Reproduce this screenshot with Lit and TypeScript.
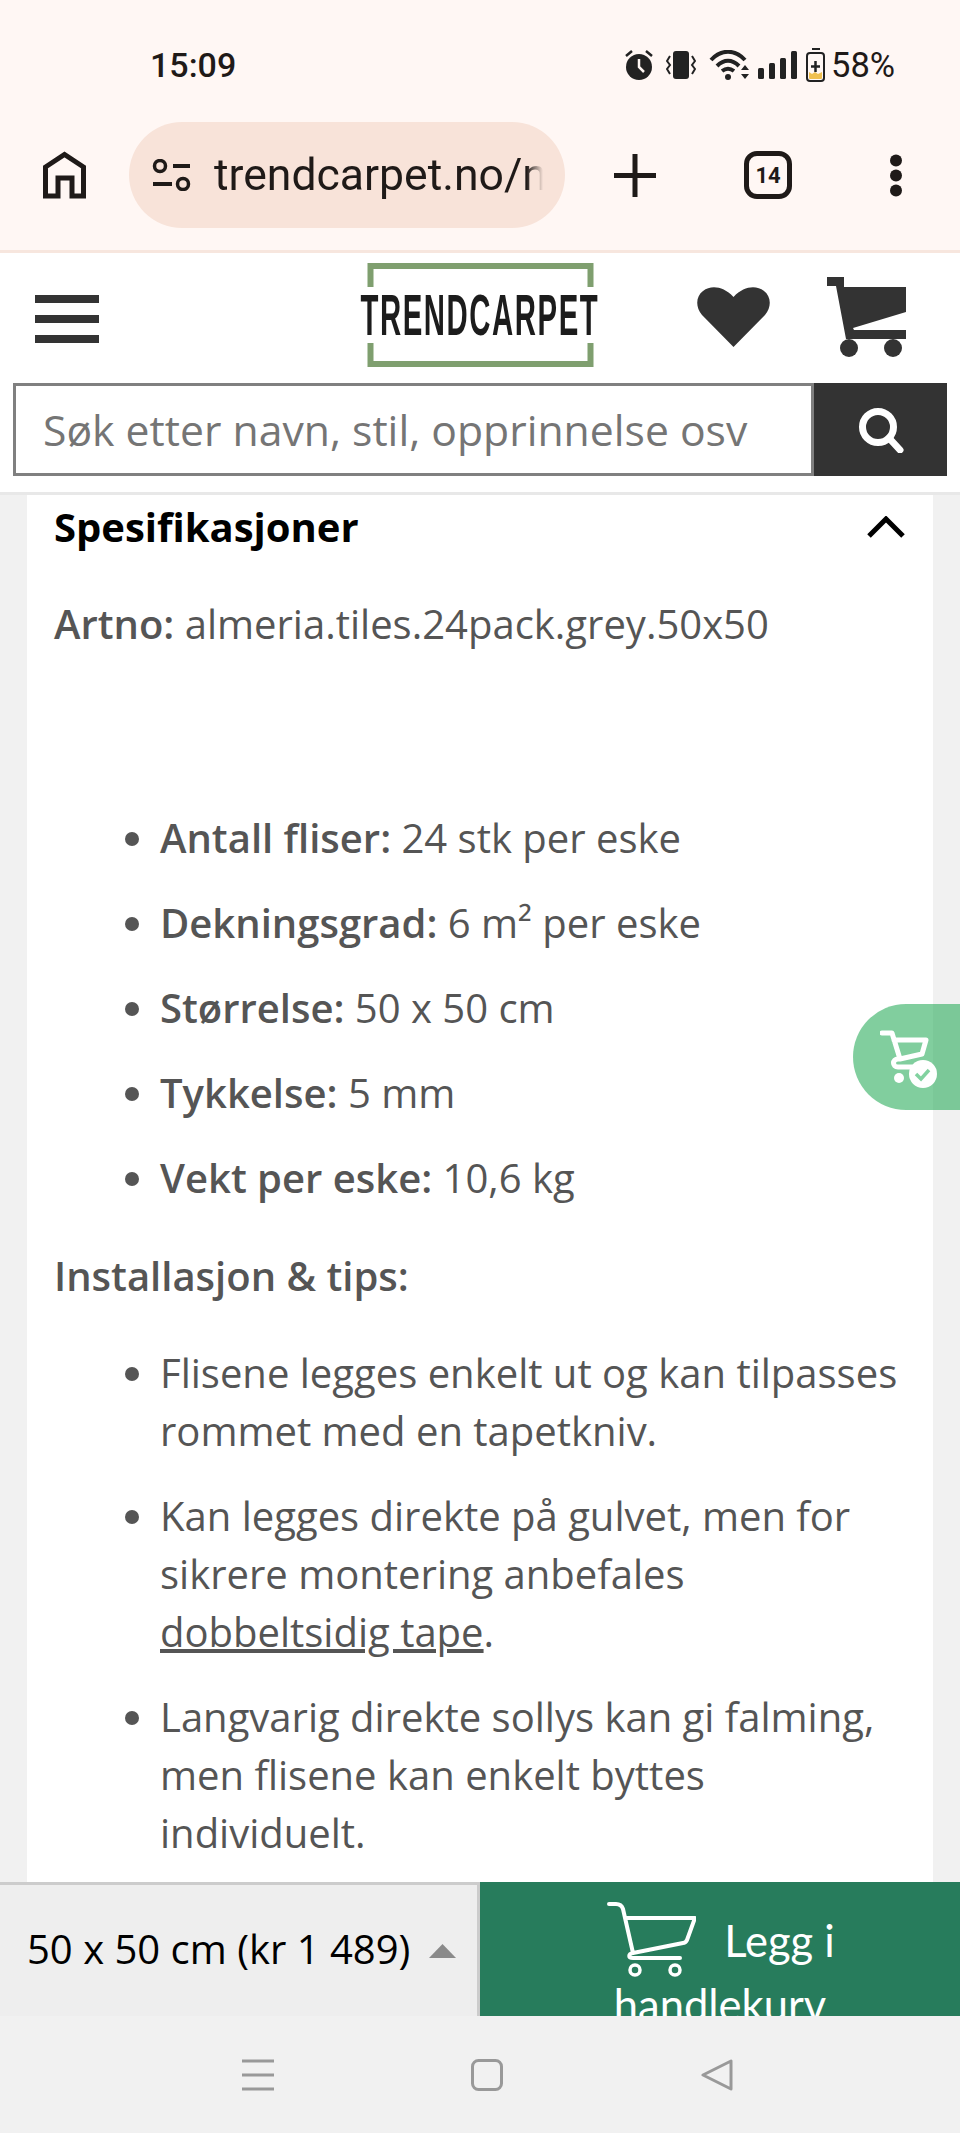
import { LitElement, html, css } from "lit";
import { customElement } from "lit/decorators.js";

@customElement("app-root")
export class AppRoot extends LitElement {
  static styles = css`
    :host { display: flex; flex-direction: column; width: 960px; height: 2133px; overflow: hidden; position: relative; background: #f1f1f1; font-family: "Open Sans", sans-serif; color: #555; }
    svg { display: block; flex: none; }
    .chrome { background: #fff7f4; height: 250px; border-bottom: 3px solid #f7e6de; flex: none; display: flex; flex-direction: column; font-family: Roboto, sans-serif; color: #1f1a18; }
    .status { height: 122px; display: flex; align-items: flex-start; padding: 47px 67px 0 150px; box-sizing: border-box; }
    .time { font-size: 34px; line-height: 36px; font-weight: 500; width: 475px; flex: none; }
    .sicons { display: flex; align-items: center; height: 36px; }
    .pct { font-size: 34.5px; line-height: 36px; margin-left: 6px; }
    .toolbar { height: 106px; display: flex; align-items: center; padding-left: 43px; }
    .pill { width: 436px; height: 106px; margin-left: 43px; border-radius: 53px; background: #f8e3d9; display: flex; align-items: center; padding-left: 23px; box-sizing: border-box; flex: none; overflow: hidden; }
    .url { font-size: 44.5px; width: 329px; margin-left: 23px; overflow: hidden; white-space: nowrap; -webkit-mask-image: linear-gradient(90deg, #000 95%, transparent); mask-image: linear-gradient(90deg, #000 95%, transparent); }
    .plus { margin-left: 49px; }
    .tabs { margin-left: 88px; width: 48px; height: 48px; border: 5px solid #1f1a18; border-radius: 13px; box-sizing: border-box; display: flex; align-items: center; justify-content: center; font-size: 22px; font-weight: 700; }
    .dots { margin-left: 97px; }
    .header { background: #fff; height: 242px; border-bottom: 3px solid #e8e8e8; box-sizing: border-box; flex: none; display: flex; flex-direction: column; }
    .hrow { height: 130px; display: flex; align-items: flex-start; padding-left: 35px; }
    .burger { margin-top: 42px; display: flex; flex-direction: column; gap: 12px; width: 64px; flex: none; }
    .burger i { display: block; height: 8px; background: #333; }
    .logo { margin-left: 262px; margin-top: 10px; width: 238px; height: 104px; display: flex; align-items: center; justify-content: center; position: relative; flex: none; }
    .logo svg { position: absolute; left: 6px; top: 0; }
    .logo-text { font-family: "Liberation Sans", sans-serif; font-weight: 700; font-size: 57px; line-height: 57px; color: #1c1c1c; white-space: nowrap; transform: scaleX(.515); letter-spacing: 3px; }
    .heart { margin-left: 98px; margin-top: 34px; }
    .cart { margin-left: 57px; margin-top: 24px; }
    .search { margin: 0 13px; height: 93px; display: flex; flex: none; }
    .field { width: 801px; box-sizing: border-box; border: 3px solid #808080; background: #fff; font-size: 42.7px; color: #757575; display: flex; align-items: center; padding-left: 27px; white-space: nowrap; overflow: hidden; }
    .sbtn { width: 133px; background: #333; display: flex; align-items: center; justify-content: center; }
    .main { flex: 1; min-height: 0; overflow: hidden; padding: 0 27px; }
    .card { background: #fff; padding: 3px 27px 60px; height: 1500px; box-sizing: border-box; font-size: 40px; line-height: 58px; }
    .title { display: flex; justify-content: space-between; align-items: center; color: #000; font-weight: 700; font-size: 40px; height: 58px; padding-right: 1px; }
    p { margin: 0; }
    .art { margin-top: 39px; }
    ul { margin: 0; padding: 0 0 0 106px; }
    li { margin-bottom: 27px; }
    .ul1 { margin-top: 156px; }
    .inst { margin-top: 40px; }
    .ul2 { margin-top: 39px; }
    b { font-weight: 600; }
    a { color: inherit; text-decoration: underline; }
    .bottom { height: 134px; flex: none; display: flex; }
    .sel { width: 480px; box-sizing: border-box; background: #eee; border-top: 3px solid #ccc; border-right: 3px solid #ccc; display: flex; align-items: center; padding: 0 0 4px 27px; color: #000; font-size: 40px; white-space: nowrap; }
    .tri { margin-left: 19px; margin-top: 4px; }
    .buy { width: 480px; background: #277c5c; color: #fff; font-family: Lato, sans-serif; font-size: 43.5px; line-height: 58px; overflow: hidden; display: flex; flex-direction: column; align-items: center; }
    .buyrow { display: flex; align-items: center; padding-top: 20px; height: 75px; flex: none; margin-left: 2px; }
    .legg { margin-left: 28px; margin-top: 1px; }
    .hk { margin-top: -2px; }
    .nav { height: 117px; flex: none; background: #f1f1f1; display: flex; align-items: center; padding: 0 0 0 242px; box-sizing: border-box; }
    .nav svg:nth-child(2) { margin-left: 197px; }
    .nav svg:nth-child(3) { margin-left: 198px; }
    .float { position: absolute; right: 0; top: 1004px; width: 107px; height: 106px; border-radius: 53px 0 0 53px; background: rgba(38,170,88,.58); display: flex; align-items: center; padding: 4px 0 0 27px; box-sizing: border-box; }
  `;

  render() {
    return html`
      <div class="chrome">
        <div class="status">
          <div class="time">15:09</div>
          <div class="sicons">
            <svg width="28" height="30" viewBox="0 0 28 30"><circle cx="14" cy="17" r="13" fill="#222"/><path d="M14 9v8l5 5" stroke="#fff7f4" stroke-width="2.5" fill="none"/><path d="M1 6l6-5M27 6l-6-5" stroke="#222" stroke-width="2.5"/></svg>
            <svg style="margin-left:13px" width="30" height="28" viewBox="0 0 30 28"><rect x="7" y="0" width="16" height="28" rx="3" fill="#222"/><path d="M4 5L1 10l3 4-3 4 3 5M26 5l3 5-3 4 3 4-3 5" stroke="#222" stroke-width="2" fill="none"/></svg>
            <svg style="margin-left:13px" width="40" height="30" viewBox="0 0 40 30"><path d="M2 10C12-1 26-1 36 10M8 16c7-7 15-7 22 0M13 21c4-3 8-3 12 0" stroke="#222" stroke-width="4" fill="none"/><circle cx="19" cy="27" r="3" fill="#222"/><path d="M32 20l4-5 4 5zM32 24l4 5 4-5z" fill="#222"/></svg>
            <svg style="margin-left:9px" width="39" height="28" viewBox="0 0 39 28"><rect x="0" y="17" width="6" height="11" rx="1.5" fill="#222"/><rect x="11" y="12" width="6" height="16" rx="1.5" fill="#222"/><rect x="22" y="7" width="6" height="21" rx="1.5" fill="#222"/><rect x="33" y="0" width="6" height="28" rx="1.5" fill="#222"/></svg>
            <svg style="margin-left:9px" width="19" height="34" viewBox="0 0 19 34"><rect x="6" y="0" width="8" height="2" fill="#222"/><rect x="1" y="5" width="17" height="28" rx="3" fill="#fff7f4" stroke="#222" stroke-width="2"/><path d="M3 24l3 2 3-2 3 2 4-2v6a1 1 0 0 1-1 1H4a1 1 0 0 1-1-1z" fill="#f0c050"/><path d="M9.500 13v11M5 18.500h9" stroke="#222" stroke-width="2.500"/></svg>
            <span class="pct">58%</span>
          </div>
        </div>
        <div class="toolbar">
          <svg width="43" height="48" viewBox="0 0 43 48"><path d="M2.500 45V16L21.500 3.500 40.500 16v29H29V27H15v18z" fill="none" stroke="#1f1a18" stroke-width="5"/></svg>
          <div class="pill">
            <svg width="39" height="32" viewBox="0 0 39 32"><circle cx="8" cy="7" r="5.500" fill="none" stroke="#1f1a18" stroke-width="3.500"/><path d="M21 7h17M1 25h19" stroke="#1f1a18" stroke-width="4"/><circle cx="31" cy="25" r="5.500" fill="none" stroke="#1f1a18" stroke-width="3.500"/></svg>
            <div class="url">trendcarpet.no/norge</div>
          </div>
          <svg class="plus" width="42" height="43" viewBox="0 0 42 43"><path d="M21 0v43M0 21.500h42" stroke="#1f1a18" stroke-width="5"/></svg>
          <div class="tabs">14</div>
          <svg class="dots" width="14" height="43" viewBox="0 0 14 43"><circle cx="7" cy="6.500" r="6" fill="#1f1a18"/><circle cx="7" cy="21.500" r="6" fill="#1f1a18"/><circle cx="7" cy="36.500" r="6" fill="#1f1a18"/></svg>
        </div>
      </div>
      <div class="header">
        <div class="hrow">
          <div class="burger"><i></i><i></i><i></i></div>
          <div class="logo">
            <svg width="227" height="104" viewBox="0 0 227 104"><path d="M3.500 24V3h220V24M3.500 80v21h220V80" fill="none" stroke="#7f9f6f" stroke-width="6"/></svg>
            <span class="logo-text">TRENDCARPET</span>
          </div>
          <svg class="heart" width="73" height="60" viewBox="0 0 73 60"><path d="M36.500 60L5 28C-2 20-1 9 6 4c8-6 20-5 30.500 6C47-1 59-2 67 4c7 5 8 16 1 24z" fill="#333"/></svg>
          <svg class="cart" width="80" height="81" viewBox="0 0 80 81"><path d="M0 0H17V10H79V35L26 51 27 53H79V62H19L9 9H0Z" fill="#333"/><circle cx="22" cy="71" r="9" fill="#333"/><circle cx="66" cy="71" r="9" fill="#333"/></svg>
        </div>
        <div class="search">
          <div class="field">Søk etter navn, stil, opprinnelse osv</div>
          <div class="sbtn"><svg width="46" height="46" viewBox="0 0 46 46"><circle cx="20" cy="20" r="15.500" fill="none" stroke="#fff" stroke-width="7"/><path d="M31 31l11 12" stroke="#fff" stroke-width="7" stroke-linecap="round"/></svg></div>
        </div>
      </div>
      <div class="main">
        <div class="card">
          <div class="title"><span>Spesifikasjoner</span>
            <svg width="38" height="22" viewBox="0 0 38 22"><path d="M2 20L19 3l17 17" fill="none" stroke="#000" stroke-width="5"/></svg>
          </div>
          <p class="art"><b>Artno:</b> almeria.tiles.24pack.grey.50x50</p>
          <ul class="ul1">
            <li><b>Antall fliser:</b> 24 stk per eske</li>
            <li><b>Dekningsgrad:</b> 6 m² per eske</li>
            <li><b>Størrelse:</b> 50 x 50 cm</li>
            <li><b>Tykkelse:</b> 5 mm</li>
            <li><b>Vekt per eske:</b> 10,6 kg</li>
          </ul>
          <p class="inst"><b>Installasjon &amp; tips:</b></p>
          <ul class="ul2">
            <li>Flisene legges enkelt ut og kan tilpasses rommet med en tapetkniv.</li>
            <li>Kan legges direkte på gulvet, men for sikrere montering anbefales <a>dobbeltsidig tape</a>.</li>
            <li>Langvarig direkte sollys kan gi falming, men flisene kan enkelt byttes individuelt.</li>
          </ul>
        </div>
      </div>
      <div class="bottom">
        <div class="sel">50 x 50 cm (kr 1 489)
          <svg class="tri" width="27" height="14" viewBox="0 0 27 14"><path d="M13.500 0L27 14H0z" fill="#8a8a8a"/></svg>
        </div>
        <div class="buy">
          <div class="buyrow">
            <svg width="89" height="75" viewBox="0 0 89 75"><path d="M2 2h7c4 0 6 2 7 5l10 44c-5 1-5 5 0 5h47M18 16h70l-8 22c-1 2-2 3-4 3L26 51" fill="none" stroke="#fff" stroke-width="4" stroke-linecap="round" stroke-linejoin="round"/><circle cx="28" cy="68" r="5" fill="none" stroke="#fff" stroke-width="3.500"/><circle cx="68" cy="68" r="5" fill="none" stroke="#fff" stroke-width="3.500"/></svg>
            <span class="legg">Legg i</span>
          </div>
          <div class="hk">handlekurv</div>
        </div>
      </div>
      <div class="nav">
        <svg width="32" height="32" viewBox="0 0 32 32"><path d="M0 2h32M0 16h32M0 30h32" stroke="#999" stroke-width="3"/></svg>
        <svg width="32" height="32" viewBox="0 0 32 32"><rect x="1.500" y="1.500" width="29" height="29" rx="6" fill="none" stroke="#999" stroke-width="3"/></svg>
        <svg width="32" height="32" viewBox="0 0 32 32"><path d="M30 2v28L2 16z" fill="none" stroke="#999" stroke-width="3" stroke-linejoin="round"/></svg>
      </div>
      <div class="float">
        <svg width="60" height="60" viewBox="0 0 60 60"><path d="M2 4h10l8 26h-2c-6 0-6 8 0 8h14M14 11h32l-4 14-22 5" fill="none" stroke="#fff" stroke-width="5" stroke-linejoin="round" stroke-linecap="round"/><circle cx="19" cy="49" r="5" fill="#fff"/><circle cx="43" cy="45" r="14" fill="#fff"/><path d="M36 45l5 5 8-9" fill="none" stroke="#82d2a0" stroke-width="3.500"/></svg>
      </div>
    `;
  }
}
